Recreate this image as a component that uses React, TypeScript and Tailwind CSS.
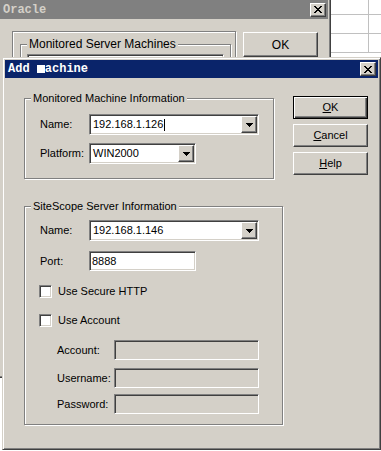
import React from "react";

// Win2000-style bevels
const sunken =
  "border border-t-[#808080] border-l-[#808080] border-r-white border-b-white shadow-[inset_1px_1px_0_#404040,inset_-1px_-1px_0_#d4d0c8]";
const raised =
  "border border-t-white border-l-white border-r-[#404040] border-b-[#404040] shadow-[inset_-1px_-1px_0_#808080]";
const frame =
  "border border-t-[#d4d0c8] border-l-[#d4d0c8] border-r-[#404040] border-b-[#404040] shadow-[inset_1px_1px_0_#fff,inset_-1px_-1px_0_#808080]";
const etched =
  "border border-[#808080] shadow-[1px_1px_0_#fff,inset_1px_1px_0_#fff]";
const ui = "font-['Liberation_Sans',Arial,sans-serif] text-[11px] text-black";

const xPixels = [
  [0, 1, 6, 7],
  [1, 2, 5, 6],
  [2, 3, 4, 5],
  [3, 4],
  [2, 3, 4, 5],
  [1, 2, 5, 6],
  [0, 1, 6, 7],
];

function CloseButton() {
  return (
    <div className={`flex h-[14px] w-[16px] items-center justify-center bg-[#d4d0c8] ${raised}`}>
      <svg width="8" height="7" viewBox="0 0 8 7" shapeRendering="crispEdges">
        {xPixels.map((row, y) =>
          row.map((x) => <rect key={`${x}-${y}`} x={x} y={y} width="1" height="1" fill="#000" />)
        )}
      </svg>
    </div>
  );
}

function DropButton() {
  return (
    <div className={`flex h-[17px] w-[16px] shrink-0 items-center justify-center bg-[#d4d0c8] ${raised}`}>
      <svg width="7" height="4" viewBox="0 0 7 4" shapeRendering="crispEdges">
        <rect x="0" y="0" width="7" height="1" fill="#000" />
        <rect x="1" y="1" width="5" height="1" fill="#000" />
        <rect x="2" y="2" width="3" height="1" fill="#000" />
        <rect x="3" y="3" width="1" height="1" fill="#000" />
      </svg>
    </div>
  );
}

function Combo({ width, value, caret }: { width: string; value: string; caret?: boolean }) {
  return (
    <div className={`flex h-[21px] ${width} bg-white p-px ${sunken}`}>
      <div className="flex flex-1 items-center pl-[2px]">
        {value}
        {caret && <span className="ml-px inline-block h-[12px] w-px bg-black" />}
      </div>
      <DropButton />
    </div>
  );
}

function Edit({ width, value, disabled }: { width: string; value?: string; disabled?: boolean }) {
  return (
    <div
      className={`flex h-[20px] ${width} items-center p-px pl-[2px] ${sunken} ${
        disabled ? "bg-[#d4d0c8]" : "bg-white"
      }`}
    >
      {value}
    </div>
  );
}

function Check({ label }: { label: string }) {
  return (
    <div className="-ml-px flex h-[13px] items-center gap-[6px]">
      <div className={`h-[13px] w-[13px] bg-white ${sunken}`} />
      <span>{label}</span>
    </div>
  );
}

function Button({ children, isDefault }: { children: React.ReactNode; isDefault?: boolean }) {
  return (
    <div
      className={`flex h-[23px] w-[75px] items-center justify-center bg-[#d4d0c8] ${
        isDefault
          ? "border border-black shadow-[inset_1px_1px_0_#fff,inset_-1px_-1px_0_#404040,inset_-2px_-2px_0_#808080]"
          : raised
      }`}
    >
      {children}
    </div>
  );
}

export default function App() {
  return (
    <div className={`relative h-[451px] w-[381px] overflow-hidden bg-white ${ui}`}>
      {/* spreadsheet behind */}
      <div className="absolute left-[331px] top-0 flex w-[50px] flex-col">
        {["h-[15px]", "h-[19px]", "h-[19px]"].map((h, i) => (
          <div key={i} className={`flex ${h} border-b border-[#c0c0c0]`}>
            <div className="w-[38px] border-r border-[#c0c0c0]" />
          </div>
        ))}
      </div>

      {/* Oracle window (inactive) */}
      <div className={`absolute left-[-4px] top-[-3px] flex h-[381px] w-[335px] flex-col bg-[#d4d0c8] p-[2px] ${frame}`}>
        <div className="flex h-[19px] items-center justify-between bg-[#808080] pl-[4px] pr-[2px]">
          <span className="font-['Liberation_Mono',monospace] text-[12px] font-bold text-[#d4d0c8]">Oracle</span>
          <CloseButton />
        </div>
        <div className="flex pl-[13px] pt-[12px]">
          <div className={`h-[300px] w-[224px] pl-[7px] pt-[6px] ${etched}`}>
            <fieldset className={`h-[200px] w-[211px] p-0 ${etched}`}>
              <legend className="ml-[6px] bg-[#d4d0c8] px-[2px] text-[12px] leading-[13px]">
                Monitored Server Machines
              </legend>
              <div className="pl-[6px] pt-[3px]">
                <div className={`h-[120px] w-[197px] bg-white ${sunken}`} />
              </div>
            </fieldset>
          </div>
          <div className="ml-[7px] mt-px">
            <div className={`flex h-[25px] w-[75px] items-center justify-center text-[12px] ${raised}`}>OK</div>
          </div>
        </div>
      </div>

      {/* Add Machine dialog */}
      <div className={`absolute left-[2px] top-[57px] flex h-[393px] w-[379px] flex-col bg-[#d4d0c8] p-[2px] ${frame}`}>
        <div className="flex h-[18px] shrink-0 items-center justify-between bg-[#0a246a] pl-[3px] pr-[2px]">
          <span className="font-['Liberation_Mono',monospace] text-[12px] font-bold text-white">
            Add{" "}
            <span className="inline-block h-[8px] w-[8px] bg-white align-baseline leading-[8px] text-transparent">
              M
            </span>
            achine
          </span>
          <CloseButton />
        </div>

        <div className="flex pl-[19px] pt-[14px]">
          <div className="flex w-[259px] flex-col">
            {/* Monitored Machine Information */}
            <fieldset className={`h-[87px] w-[250px] p-0 ${etched}`}>
              <legend className="ml-[6px] bg-[#d4d0c8] px-[2px] leading-[13px]">
                Monitored Machine Information
              </legend>
              <div className="flex flex-col pl-[15px] pt-[9px]">
                <div className="flex items-center">
                  <span className="w-[49px]">Name:</span>
                  <Combo width="w-[170px]" value="192.168.1.126" caret />
                </div>
                <div className="mt-[8px] flex items-center">
                  <span className="w-[49px]">Platform:</span>
                  <Combo width="w-[107px]" value="WIN2000" />
                </div>
              </div>
            </fieldset>

            {/* SiteScope Server Information */}
            <fieldset className={`mt-[21px] h-[225px] w-[259px] p-0 ${etched}`}>
              <legend className="ml-[6px] bg-[#d4d0c8] px-[2px] leading-[13px]">
                SiteScope Server Information
              </legend>
              <div className="flex flex-col pl-[15px] pt-[7px]">
                <div className="flex items-center">
                  <span className="w-[49px]">Name:</span>
                  <Combo width="w-[170px]" value="192.168.1.146" />
                </div>
                <div className="mt-[10px] flex items-center">
                  <span className="w-[49px]">Port:</span>
                  <Edit width="w-[107px]" value="8888" />
                </div>
                <div className="mt-[14px]">
                  <Check label="Use Secure HTTP" />
                </div>
                <div className="mt-[16px]">
                  <Check label="Use Account" />
                </div>
                <div className="mt-[13px] flex flex-col pl-[17px]">
                  <div className="flex items-center">
                    <span className="w-[57px]">Account:</span>
                    <Edit width="w-[145px]" disabled />
                  </div>
                  <div className="mt-[8px] flex items-center">
                    <span className="w-[57px]">Username:</span>
                    <Edit width="w-[145px]" disabled />
                  </div>
                  <div className="mt-[6px] flex items-center">
                    <span className="w-[57px]">Password:</span>
                    <Edit width="w-[145px]" disabled />
                  </div>
                </div>
              </div>
            </fieldset>
          </div>

          <div className="ml-[10px] mt-[4px] flex flex-col gap-[5px]">
            <Button isDefault>
              <u>O</u>K
            </Button>
            <Button>
              <u>C</u>ancel
            </Button>
            <Button>
              <u>H</u>elp
            </Button>
          </div>
        </div>
      </div>
    </div>
  );
}
